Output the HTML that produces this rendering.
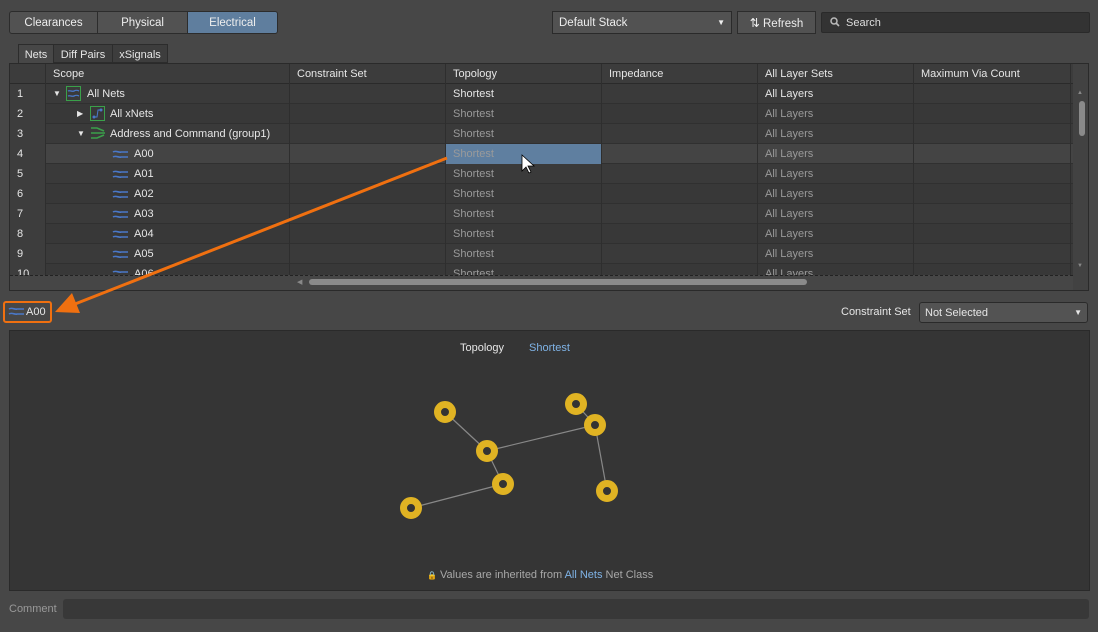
<!DOCTYPE html>
<html><head><style>
*{box-sizing:border-box;margin:0;padding:0}
body{width:1098px;height:632px;background:#474747;font-family:"Liberation Sans",sans-serif;font-size:11px;color:#e6e6e6;position:relative;overflow:hidden}
.a{position:absolute}
.btn{position:absolute;top:11px;height:23px;border:1px solid #2c2c2c;background:#525252;color:#eee;text-align:center;line-height:22px;font-size:11.5px}
.row{position:absolute;left:10px;width:1063px;height:20px;border-bottom:1px solid #303030;background:#3a3a3a}
.c{position:absolute;top:0;height:20px;line-height:21px;border-right:1px solid #2e2e2e;padding-left:7px;white-space:nowrap;overflow:hidden}
.g{color:#9a9a9a}
.s{position:absolute;top:0;line-height:21px}
</style></head><body>
<div class="btn" style="left:9px;width:89px;border-radius:3px 0 0 3px">Clearances</div>
<div class="btn" style="left:97px;width:91px">Physical</div>
<div class="btn" style="left:187px;width:91px;background:#5f7e9e;border-radius:0 3px 3px 0">Electrical</div>
<div class="btn" style="left:552px;width:180px;text-align:left;padding-left:6px;border-color:#2a2a2a">Default Stack<span style="position:absolute;right:6px;top:0;font-size:8px">&#9660;</span></div>
<div class="btn" style="left:737px;width:79px"><span style="font-size:12px">&#8645;</span> Refresh</div>
<div class="a" style="left:821px;top:12px;width:269px;height:21px;background:#333;border:1px solid #2a2a2a;border-radius:2px;line-height:20px;padding-left:8px;color:#ddd"><svg width="10" height="10" style="vertical-align:-1px;margin-right:6px"><circle cx="4" cy="4" r="3" stroke="#bbb" stroke-width="1.5" fill="none"/><line x1="6" y1="6" x2="9" y2="9" stroke="#bbb" stroke-width="1.6"/></svg>Search</div>
<div class="a" style="left:18px;top:44px;width:36px;height:19px;background:#474747;border:1px solid #2c2c2c;border-bottom:none;text-align:center;line-height:20px">Nets</div>
<div class="a" style="left:53px;top:44px;width:60px;height:19px;background:#3d3d3d;border:1px solid #2c2c2c;text-align:center;line-height:20px">Diff Pairs</div>
<div class="a" style="left:112px;top:44px;width:56px;height:19px;background:#3d3d3d;border:1px solid #2c2c2c;text-align:center;line-height:20px">xSignals</div>
<div class="a" style="left:9px;top:63px;width:1080px;height:228px;border:1px solid #2a2a2a;background:#424242;overflow:hidden">
 <div class="a" style="left:0;top:0;width:1063px;height:20px;background:#3c3c3c;border-bottom:1px solid #2a2a2a">
  <div class="c" style="left:0;width:36px"></div><div class="c" style="left:36px;width:244px">Scope</div><div class="c" style="left:280px;width:156px">Constraint Set</div><div class="c" style="left:436px;width:156px">Topology</div><div class="c" style="left:592px;width:156px">Impedance</div><div class="c" style="left:748px;width:156px">All Layer Sets</div><div class="c" style="left:904px;width:157px">Maximum Via Count</div>
 </div>
 <div class="a" style="left:1069px;top:37px;width:6px;height:35px;background:#8a8a8a;border-radius:3px"></div>
 <div class="a" style="left:1067px;top:26px;font-size:6px;color:#888">&#9650;</div>
 <div class="a" style="left:1067px;top:199px;font-size:6px;color:#888">&#9660;</div>
</div>
<div id="rows"></div>
<script>
var names=["All Nets","All xNets","Address and Command (group1)","A00","A01","A02","A03","A04","A05","A06"];
var h="";
for(var i=0;i<10;i++){
 var y=84+i*20; var hl=i==3; var bg=hl?"#444":(i%2?"#383838":"#3a3a3a");
 var icon,ix,tx,ax=-1;
 if(i==0){ax=7;ix=20;tx=41;icon='<svg width="15" height="15"><rect x="0.5" y="0.5" width="14" height="14" fill="none" stroke="#3aa04a"/><path d="M2 5c2-1 4 1 6 0s3-1 5 0M2 10c2-1 4 1 6 0s3-1 5 0" stroke="#4a78c8" fill="none" stroke-width="1.3"/></svg>';}
 else if(i==1){ax=31;ix=44;tx=64;icon='<svg width="15" height="15"><rect x="0.5" y="0.5" width="14" height="14" fill="none" stroke="#3aa04a"/><path d="M4 11h3l1-7h3" stroke="#4a78c8" fill="none"/><circle cx="4" cy="11" r="1.5" fill="#4a78c8"/><circle cx="11" cy="4" r="1.5" fill="#4a78c8"/></svg>';}
 else if(i==2){ax=31;ix=44;tx=64;icon='<svg width="16" height="15"><path d="M1 2h6l7 3M1 7h14M1 12h6l7-3" stroke="#3aa04a" fill="none" stroke-width="1.6"/></svg>';}
 else {ix=66;tx=88;icon='<svg width="18" height="10"><path d="M1 3c3-2 6 1 8 0h7M1 8c3-2 6 1 8 0h7" stroke="#4a78c8" fill="none" stroke-width="1.6"/></svg>';}
 var arr=ax<0?'':'<span class="s" style="left:'+ax+'px;font-size:8px;line-height:20px">'+(i==1?'&#9654;':'&#9660;')+'</span>';
 var g=i==0?"":"g";
 h+='<div class="row" style="top:'+y+'px;background:'+bg+'">'+
 '<div class="c" style="left:0;width:36px;background:#3d3d3d">'+(i+1)+'</div>'+
 '<div class="c" style="left:36px;width:244px">'+arr+'<span class="a" style="left:'+ix+'px;top:'+(i<3?2:5)+'px;line-height:0">'+icon+'</span><span class="s" style="left:'+tx+'px">'+names[i]+'</span></div>'+
 '<div class="c" style="left:280px;width:156px"></div>'+
 '<div class="c '+g+'" style="left:436px;width:156px;'+(hl?'background:#5f7fa0;':'')+'">Shortest</div>'+
 '<div class="c" style="left:592px;width:156px"></div>'+
 '<div class="c '+g+'" style="left:748px;width:156px">All Layers</div>'+
 '<div class="c" style="left:904px;width:157px"></div></div>';
}
var w=document.getElementById("rows");w.innerHTML=h;w.style.cssText="position:absolute;left:0;top:0;width:1098px;height:275px;overflow:hidden";
</script>
<div class="a" style="left:10px;top:275px;width:1063px;height:15px;background:#464646;border-top:1px dashed #222"></div>
<div class="a" style="left:309px;top:279px;width:498px;height:6px;background:#8a8a8a;border-radius:3px"></div>
<div class="a" style="left:297px;top:278px;font-size:7px;color:#888">&#9664;</div>
<div class="a" style="left:3px;top:301px;width:49px;height:22px;border:2px solid #f07010;border-radius:3px;line-height:19px;padding-left:3px"><svg width="18" height="10" style="vertical-align:-1px"><path d="M1 3c3-2 6 1 8 0h7M1 8c3-2 6 1 8 0h7" stroke="#4a78c8" fill="none" stroke-width="1.6"/></svg>A00</div>
<div class="a" style="left:841px;top:306px;">Constraint Set</div>
<div class="a" style="left:919px;top:302px;width:169px;height:21px;background:#535353;border:1px solid #2a2a2a;border-radius:3px;line-height:20px;padding-left:5px">Not Selected<span style="position:absolute;right:5px;font-size:8px">&#9660;</span></div>
<div class="a" style="left:9px;top:330px;width:1081px;height:261px;background:#353535;border:1px solid #2a2a2a"></div>
<div class="a" style="left:460px;top:342px">Topology</div>
<div class="a" style="left:529px;top:342px;color:#7fb3e6">Shortest</div>
<svg class="a" style="left:0;top:0" width="1098" height="632">
<g stroke="#888" stroke-width="1.2"><line x1="445" y1="412" x2="487" y2="451"/><line x1="487" y1="451" x2="595" y2="425"/><line x1="487" y1="451" x2="503" y2="484"/><line x1="503" y1="484" x2="411" y2="508"/><line x1="576" y1="404" x2="595" y2="425"/><line x1="595" y1="425" x2="607" y2="491"/></g>
<g fill="#333" stroke="#e0b323" stroke-width="7"><circle cx="445" cy="412" r="7.5"/><circle cx="487" cy="451" r="7.5"/><circle cx="503" cy="484" r="7.5"/><circle cx="411" cy="508" r="7.5"/><circle cx="576" cy="404" r="7.5"/><circle cx="595" cy="425" r="7.5"/><circle cx="607" cy="491" r="7.5"/></g>
<line x1="447" y1="158" x2="75" y2="304" stroke="#f07010" stroke-width="3"/>
<polygon points="55,312 72,293 80,313" fill="#f07010"/>
<polygon points="522,155 522,171 526,167 529,173 531,172 528,166 534,166" fill="#fff" stroke="#000" stroke-width="0.8"/>
</svg>
<div class="a" style="left:427px;top:569px;color:#a8a8a8"><span style="font-size:8px">&#128274;</span> Values are inherited from <span style="color:#7fb3e6">All Nets</span> Net Class</div>
<div class="a" style="left:9px;top:603px;color:#999">Comment</div>
<div class="a" style="left:63px;top:599px;width:1026px;height:20px;background:#383838;border-radius:3px"></div>
</body></html>
